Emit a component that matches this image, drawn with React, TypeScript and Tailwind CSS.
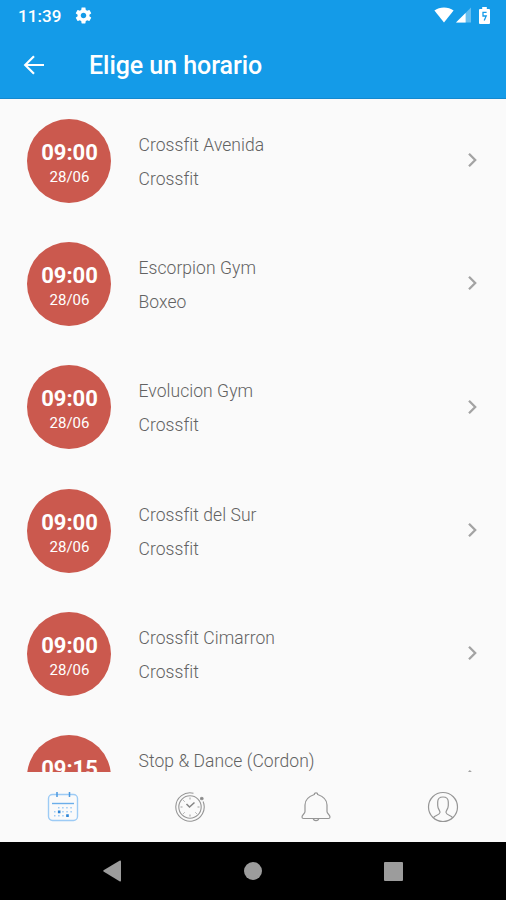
import React from 'react';

interface Slot {
  time: string;
  date: string;
  place: string;
  activity: string;
}

const slots: Slot[] = [
  { time: '09:00', date: '28/06', place: 'Crossfit Avenida', activity: 'Crossfit' },
  { time: '09:00', date: '28/06', place: 'Escorpion Gym', activity: 'Boxeo' },
  { time: '09:00', date: '28/06', place: 'Evolucion Gym', activity: 'Crossfit' },
  { time: '09:00', date: '28/06', place: 'Crossfit del Sur', activity: 'Crossfit' },
  { time: '09:00', date: '28/06', place: 'Crossfit Cimarron', activity: 'Crossfit' },
  { time: '09:15', date: '', place: 'Stop & Dance (Cordon)', activity: '' },
];

const StatusBar = () => (
  <div className="flex h-8 items-center justify-between pl-[18px] pr-[16px]">
    <div className="flex items-center gap-[13px]">
      <span className="text-[17px] font-medium leading-8 tracking-[0.1px]">11:39</span>
      <svg className="-ml-px -mt-px" width="19" height="19" viewBox="0 0 24 24" fill="currentColor">
        <path d="M19.43 12.98c.04-.32.07-.64.07-.98s-.03-.66-.07-.98l2.11-1.65c.19-.15.24-.42.12-.64l-2-3.46c-.12-.22-.39-.3-.61-.22l-2.49 1c-.52-.4-1.08-.73-1.69-.98l-.38-2.65C14.46 2.18 14.25 2 14 2h-4c-.25 0-.46.18-.49.42l-.38 2.65c-.61.25-1.17.59-1.69.98l-2.49-1c-.23-.09-.49 0-.61.22l-2 3.46c-.13.22-.07.49.12.64l2.11 1.65c-.04.32-.07.65-.07.98s.03.66.07.98l-2.11 1.65c-.19.15-.24.42-.12.64l2 3.46c.12.22.39.3.61.22l2.49-1c.52.4 1.08.73 1.69.98l.38 2.65c.03.24.24.42.49.42h4c.25 0 .46-.18.49-.42l.38-2.65c.61-.25 1.17-.59 1.69-.98l2.49 1c.23.09.49 0 .61-.22l2-3.46c.12-.22.07-.49-.12-.64l-2.11-1.65zM12 15.5c-1.93 0-3.5-1.57-3.5-3.5s1.57-3.5 3.5-3.5 3.5 1.57 3.5 3.5-1.57 3.5-3.5 3.5z" />
      </svg>
    </div>
    <div className="-mt-[2px] flex items-center">
      <svg width="20" height="16" viewBox="0 0 20 16" fill="currentColor">
        <path d="M0.4 3.4C5.6-0.6 14.4-0.6 19.6 3.4L10 15.4Z" />
      </svg>
      <svg className="ml-[2px]" width="15" height="16" viewBox="0 0 15 16" fill="currentColor">
        <path d="M0 15.5L15 0.5V15.5Z" opacity="0.35" />
        <path d="M0 15.5L9.6 5.9V15.5Z" />
      </svg>
      <svg className="ml-[8px]" width="11" height="17" viewBox="0 0 11 17">
        <path d="M3.2 0H7.8V2H10Q11 2 11 3V16Q11 17 10 17H1Q0 17 0 16V3Q0 2 1 2H3.2Z" fill="currentColor" />
        <path d="M7.6 5.4H4V9H7.2L5.2 13.4" fill="none" stroke="#149be8" strokeWidth="1.3" />
      </svg>
    </div>
  </div>
);

const Header = () => (
  <header className="h-[99px] shrink-0 border-b border-[#1389cf] bg-[#149be8] text-white">
    <StatusBar />
    <div className="flex h-[66px] items-center pl-[23px]">
      <svg className="-mt-px" width="22" height="20" viewBox="0 0 22 20" fill="none" stroke="currentColor" strokeWidth="2.2">
        <path d="M21 10H2.5M11 1.2L2.2 10L11 18.8" />
      </svg>
      <h1 className="ml-[44px] mt-[2px] text-[25px] font-medium leading-[30px] tracking-[-0.05px]">Elige un horario</h1>
    </div>
  </header>
);

const SlotRow = ({ slot }: { slot: Slot }) => (
  <li className="flex h-[123.3px] shrink-0 items-center pl-[27px] pr-[29px]">
    <div className="flex size-[84px] shrink-0 flex-col items-center rounded-full bg-[#cb594e] pl-px pt-5 text-white">
      <span className="text-[22px] font-bold leading-7">{slot.time}</span>
      {slot.date && <span className="text-[15px] leading-5">{slot.date}</span>}
    </div>
    <div className="ml-[27.5px] h-[68px] flex-1 pt-px text-[17.5px] font-light leading-[34px] tracking-[0.06px] text-[#626262]">
      <div>{slot.place}</div>
      {slot.activity && <div>{slot.activity}</div>}
    </div>
    <svg className="-mt-px" width="10" height="16" viewBox="0 0 10 16" fill="none" stroke="#a3a3a3" strokeWidth="2.3">
      <path d="M2 1.800L8.200 8L2 14.200" />
    </svg>
  </li>
);

const CalendarIcon = () => (
  <svg width="32" height="32" viewBox="0 0 32 32" fill="none" stroke="#9dcbf5" strokeWidth="1.4">
    <rect x="1.5" y="3.5" width="29" height="26" rx="4" />
    <path d="M5 12.5H27" stroke="#6baeea" />
    <path d="M10 1V6M22.500 1V6" stroke="#4a98e0" strokeWidth="1.5" />
    <path d="M11 16.800H26M7 20.800H26M7 24.800H20" strokeWidth="1.500" strokeDasharray="1.500 2.600" />
    <path d="M12.200 19.400V22.200M20.500 23.200V26" stroke="#2f86d8" strokeWidth="2.600" />
  </svg>
);

const ClockIcon = () => (
  <svg width="32" height="32" viewBox="0 0 32 32" fill="none" stroke="#969696" strokeWidth="1.100">
    <path d="M19.500 2.200A14.200 14.200 0 1 0 29.100 10.500" />
    <circle cx="16" cy="16" r="11.200" />
    <path d="M16 6.500V8.500M16 23.500V25.500M6.500 16H8.500M23.500 16H25.500M9.300 9.300L10.600 10.600M22.700 22.700L21.400 21.400M9.300 22.700L10.600 21.400" strokeWidth="0.9" />
    <path d="M12.500 13L15.500 16L20.500 11.500" stroke="#858585" strokeWidth="1.500" />
    <circle cx="27.800" cy="7.500" r="1.300" fill="#858585" />
  </svg>
);

const BellIcon = () => (
  <svg width="32" height="32" viewBox="0 0 32 32" fill="none" stroke="#969696" strokeWidth="1.200">
    <path d="M14.300 3.500C14.300 1.200 17.700 1.200 17.700 3.500C23.500 5.500 27 9 27 14V20.500C27 23 30 23.500 30 26Q30 27.500 28.500 27.500H3.500Q2 27.500 2 26C2 23.500 5 23 5 20.500V14C5 9 8.500 5.500 14.300 3.500Z" />
    <path d="M13.200 27.500C13.500 30.200 18.500 30.200 18.800 27.500" />
  </svg>
);

const ProfileIcon = () => (
  <svg width="32" height="32" viewBox="0 0 32 32" fill="none" stroke="#969696" strokeWidth="1.200">
    <circle cx="16" cy="16" r="14.500" />
    <path d="M6.500 26.800C7 24.500 12.500 24.500 13 21.500C13.200 19.500 10.700 18 10.700 14.500V11C10.700 7.800 12.500 6 16 6S21.300 7.800 21.300 11V14.500C21.300 18 18.800 19.500 19 21.500C19.500 24.500 25 24.500 25.500 26.800" />
  </svg>
);

const TabBar = () => (
  <nav className="grid h-[70px] shrink-0 grid-cols-4 place-items-center bg-[#fafafa]">
    <CalendarIcon />
    <ClockIcon />
    <BellIcon />
    <ProfileIcon />
  </nav>
);

const SystemNav = () => (
  <div className="flex h-[58px] shrink-0 items-center justify-between bg-black px-[103px] text-[#9c9c9c]">
    <svg width="18" height="22" viewBox="0 0 18 22" fill="currentColor">
      <path d="M0.500 10.300Q0 11 0.500 11.500L16.500 21.200Q18 21.800 18 20.500V1.500Q18 0.200 16.500 0.800Z" />
    </svg>
    <div className="size-[18px] rounded-full bg-[#9c9c9c]" />
    <div className="size-[19px] rounded-[1px] bg-[#9c9c9c]" />
  </div>
);

export default function App() {
  return (
    <div className="flex h-[900px] w-[506px] flex-col overflow-hidden bg-[#fafafa] font-[Roboto,sans-serif]">
      <Header />
      <ul className="flex h-[673px] shrink-0 flex-col overflow-hidden">
        {slots.map((slot, i) => (
          <SlotRow key={i} slot={slot} />
        ))}
      </ul>
      <TabBar />
      <SystemNav />
    </div>
  );
}
